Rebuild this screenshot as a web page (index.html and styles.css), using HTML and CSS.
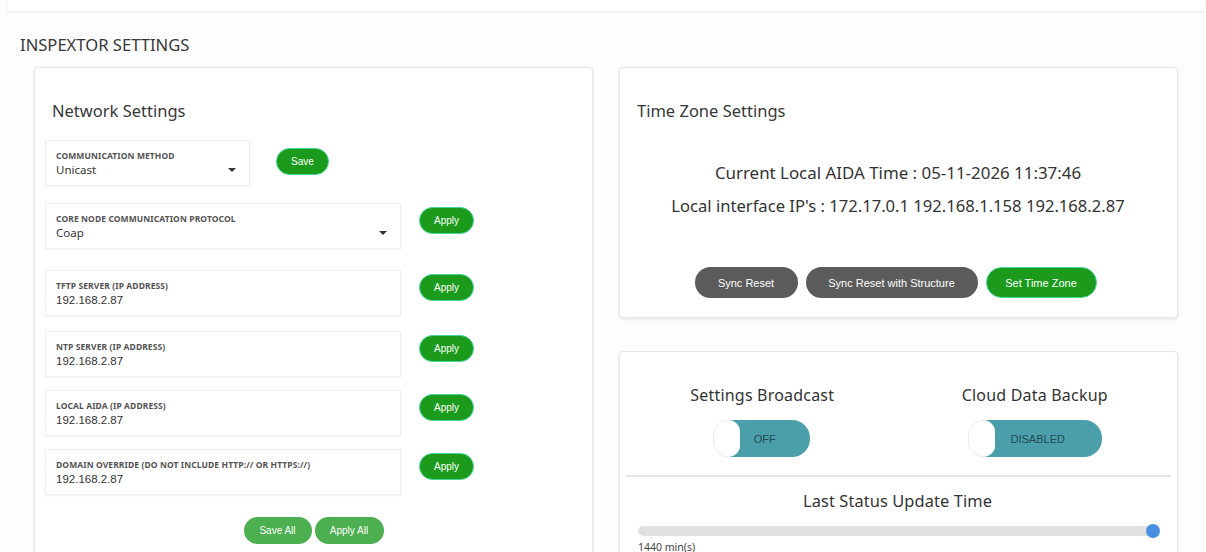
FILE: index.html
```html
<!DOCTYPE html>
<html lang="en">
<head>
<meta charset="utf-8">
<title>Inspextor Settings</title>
<link rel="stylesheet" href="styles.css">
</head>
<body>
<header class="topbar"></header>
<main class="page">
  <h1 class="page-title">INSPEXTOR SETTINGS</h1>
  <div class="grid">
    <section class="card network">
      <h2 class="card-title">Network Settings</h2>

      <div class="row row-first">
        <div class="field field-short">
          <div class="field-label">COMMUNICATION METHOD</div>
          <div class="field-value select">Unicast<span class="caret"></span></div>
        </div>
        <button class="btn btn-green btn-save">Save</button>
      </div>

      <div class="row row-2">
        <div class="field">
          <div class="field-label">CORE NODE COMMUNICATION PROTOCOL</div>
          <div class="field-value select">Coap<span class="caret"></span></div>
        </div>
        <button class="btn btn-green btn-apply">Apply</button>
      </div>

      <div class="row row-3">
        <div class="field">
          <div class="field-label">TFTP SERVER (IP ADDRESS)</div>
          <div class="field-value ip">192.168.2.87</div>
        </div>
        <button class="btn btn-green btn-apply">Apply</button>
      </div>

      <div class="row row-4">
        <div class="field">
          <div class="field-label">NTP SERVER (IP ADDRESS)</div>
          <div class="field-value ip">192.168.2.87</div>
        </div>
        <button class="btn btn-green btn-apply">Apply</button>
      </div>

      <div class="row">
        <div class="field">
          <div class="field-label">LOCAL AIDA (IP ADDRESS)</div>
          <div class="field-value ip">192.168.2.87</div>
        </div>
        <button class="btn btn-green btn-apply">Apply</button>
      </div>

      <div class="row">
        <div class="field">
          <div class="field-label">DOMAIN OVERRIDE (DO NOT INCLUDE HTTP:// OR HTTPS://)</div>
          <div class="field-value ip">192.168.2.87</div>
        </div>
        <button class="btn btn-green btn-apply">Apply</button>
      </div>

      <div class="actions">
        <button class="btn btn-light">Save All</button>
        <button class="btn btn-light">Apply All</button>
      </div>
    </section>

    <div class="side">
      <section class="card timezone">
        <h2 class="card-title">Time Zone Settings</h2>
        <p class="info info-time">Current Local AIDA Time : 05-11-2026 11:37:46</p>
        <p class="info info-ip">Local interface IP's : 172.17.0.1 192.168.1.158 192.168.2.87</p>
        <div class="tz-actions">
          <button class="btn btn-gray btn-tz">Sync Reset</button>
          <button class="btn btn-gray btn-tz">Sync Reset with Structure</button>
          <button class="btn btn-green btn-tz">Set Time Zone</button>
        </div>
      </section>

      <section class="card status">
        <div class="toggles">
          <div class="toggle-col">
            <div class="toggle-title">Settings Broadcast</div>
            <div class="toggle toggle-sm"><span class="knob"></span><span class="toggle-text">OFF</span></div>
          </div>
          <div class="toggle-col">
            <div class="toggle-title">Cloud Data Backup</div>
            <div class="toggle toggle-lg"><span class="knob"></span><span class="toggle-text">DISABLED</span></div>
          </div>
        </div>
        <hr class="divider">
        <div class="slider-title">Last Status Update Time</div>
        <div class="slider">
          <div class="track"></div>
          <span class="thumb"></span>
        </div>
        <div class="slider-value">1440 min(s)</div>
      </section>
    </div>
  </div>
</main>
</body>
</html>
```

FILE: styles.css
```css
* {
  box-sizing: border-box;
}

html, body {
  margin: 0;
  padding: 0;
  background: #fdfdfd;
  height: 552px;
  overflow: hidden;
}

body {
  font-family: "Noto Sans", "Open Sans", sans-serif;
  color: #333;
}

.topbar {
  height: 11px;
  margin: 0 1px 0 8px;
  background: #fff;
  box-shadow: 0 1px 3px rgba(0, 0, 0, 0.08);
}

.page {
  padding: 0 28px 0 20px;
}

.page-title {
  margin: 0;
  padding-top: 23px;
  height: 56px;
  font-size: 16.6px;
  font-weight: 400;
  color: #383838;
  line-height: 22px;
}

.grid {
  display: grid;
  grid-template-columns: 559px 559px;
  column-gap: 26px;
  margin-left: 14px;
}

.card {
  background: #fff;
  border: 1px solid #e8e8e8;
  border-radius: 4px;
  box-shadow: 0 1px 3px rgba(0, 0, 0, 0.12);
}

.card-title {
  margin: 0;
  font-size: 16.5px;
  font-weight: 400;
  color: #383838;
  line-height: 22px;
}

/* network card */
.network {
  padding: 32px 10px 10px 10px;
  height: 520px;
}

.network .card-title {
  padding-left: 7px;
  margin-bottom: 18px;
}

.row {
  display: flex;
  align-items: flex-start;
  margin-top: 13px;
}

.row-first {
  margin-top: 0;
}

.row-2 {
  margin-top: 17px;
}

.row-3 {
  margin-top: 21px;
}

.row-4 {
  margin-top: 15px;
}

.field {
  width: 356px;
  height: 46px;
  border: 1px solid #efefef;
  box-shadow: 0 1px 2px rgba(0, 0, 0, 0.06);
  background: #fff;
  padding: 9px 10px 0 10px;
}

.field-short {
  width: 205px;
}

.field-label {
  font-size: 8.5px;
  font-weight: 700;
  color: #555;
  line-height: 11px;
  letter-spacing: 0.1px;
}

.field-value {
  font-size: 11.5px;
  color: #333;
  line-height: 17px;
  position: relative;
}

.field-value.ip {
  font-family: "Liberation Sans", Arial, sans-serif;
  font-size: 11.5px;
  margin-top: 1px;
}

.caret {
  position: absolute;
  right: 3px;
  top: 7px;
  width: 0;
  height: 0;
  border-left: 4px solid transparent;
  border-right: 4px solid transparent;
  border-top: 4px solid #333;
}

.btn {
  font-family: "Liberation Sans", Arial, sans-serif;
  font-size: 10px;
  color: #fff;
  border: none;
  border-radius: 14px;
  height: 27px;
  padding: 0;
  cursor: pointer;
}

.btn-green {
  background: #1b9a1b;
  border: 1.5px solid #45d69a;
}

.btn-save {
  width: 53px;
  margin: 8px 0 0 26px;
}

.btn-apply {
  width: 55px;
  margin: 4px 0 0 18px;
}

.btn-light {
  background: #4caf50;
  width: 68px;
  font-size: 10px;
}

.actions {
  display: flex;
  justify-content: center;
  gap: 3px;
  margin-top: 22px;
}

.actions .btn-light + .btn-light {
  width: 69px;
}

/* side column */
.side {
  display: flex;
  flex-direction: column;
  gap: 33px;
}

.timezone {
  height: 251px;
  padding: 32px 18px 0 17px;
}

.info {
  margin: 0;
  text-align: center;
  color: #333;
  line-height: 22px;
}

.info-time {
  font-size: 16.9px;
  margin-top: 40px;
  margin-bottom: 11px;
}

.info-ip {
  font-size: 16.6px;
}

.tz-actions {
  display: flex;
  justify-content: center;
  gap: 8px;
  margin-top: 50px;
  padding-right: 5px;
}

.btn-tz {
  height: 31px;
  border-radius: 16px;
  font-size: 11px;
}

.btn-gray {
  background: #5b5b5b;
}

.tz-actions .btn-tz:nth-child(1) {
  width: 103px;
}

.tz-actions .btn-tz:nth-child(2) {
  width: 172px;
}

.tz-actions .btn-tz:nth-child(3) {
  width: 111px;
}

/* status card */
.status {
  height: 220px;
  padding: 32px 6px 0 6px;
}

.toggles {
  display: grid;
  grid-template-columns: 1fr 1fr;
}

.toggle-col {
  display: flex;
  flex-direction: column;
  align-items: center;
}

.toggle-title {
  font-size: 16px;
  color: #333;
  line-height: 22px;
  letter-spacing: 0.2px;
}

.toggle {
  position: relative;
  margin-top: 14px;
  height: 37px;
  border-radius: 18px;
  background: #4a9fab;
  display: flex;
  align-items: center;
  justify-content: center;
}

.toggle-sm {
  width: 97px;
  margin-right: 1px;
}

.toggle-lg {
  width: 134px;
}

.knob {
  position: absolute;
  left: 0;
  top: 0;
  width: 27px;
  height: 37px;
  background: #fff;
  border: 1px solid #eee;
  border-right: none;
  border-radius: 18px 14px 14px 18px;
}

.toggle-text {
  font-family: "Liberation Sans", Arial, sans-serif;
  font-size: 11px;
  color: #264a50;
  padding-left: 6px;
}

.divider {
  border: none;
  border-top: 2px solid #e6e6e6;
  margin: 18px 0 0 0;
}

.slider-title {
  text-align: center;
  font-size: 16.4px;
  color: #333;
  line-height: 22px;
  margin-top: 13px;
  padding-right: 2px;
  letter-spacing: 0.1px;
}

.slider {
  position: relative;
  margin: 14px 12px 0 12px;
  height: 10px;
}

.track {
  height: 10px;
  border-radius: 5px;
  background: #e0e0e0;
}

.thumb {
  position: absolute;
  right: -1px;
  top: -2px;
  width: 14px;
  height: 14px;
  border-radius: 50%;
  background: #4a90e2;
}

.slider-value {
  font-size: 10.5px;
  color: #444;
  margin: 4px 0 0 12px;
  line-height: 14px;
}
```
